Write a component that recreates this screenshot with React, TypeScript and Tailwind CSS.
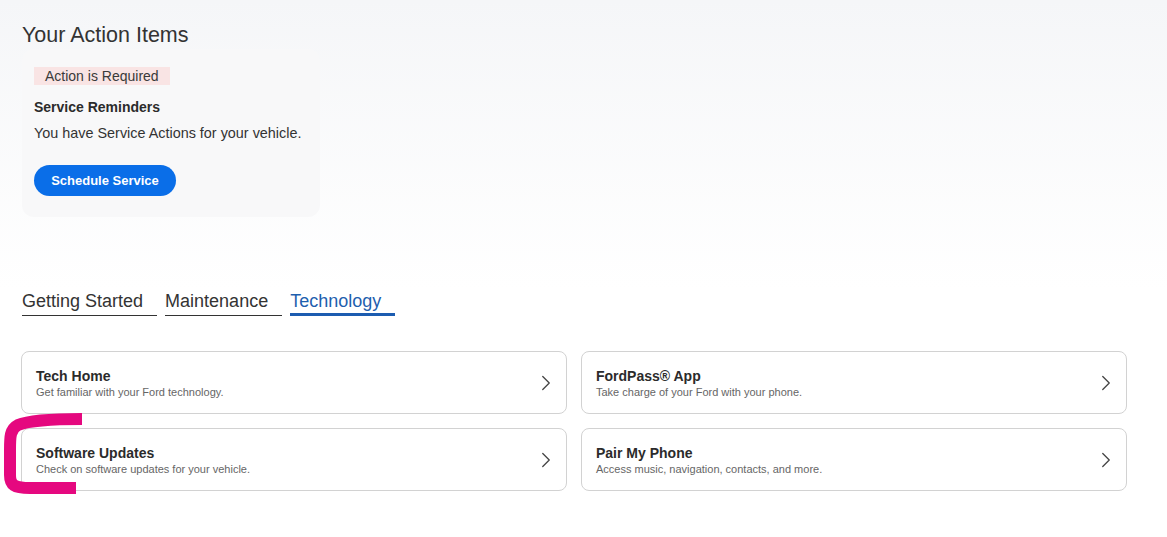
import { ChevronRight } from "lucide-react";

const links = [
  { title: "Tech Home", text: "Get familiar with your Ford technology." },
  { title: "FordPass® App", text: "Take charge of your Ford with your phone." },
  { title: "Software Updates", text: "Check on software updates for your vehicle." },
  { title: "Pair My Phone", text: "Access music, navigation, contacts, and more." },
];

const tabs = ["Getting Started", "Maintenance", "Technology"];

export default function App() {
  return (
    <div className="relative min-h-[537px] w-[1167px] bg-white font-['Liberation_Sans',Arial,sans-serif] text-[#333]">
      {/* Action items */}
      <div className="bg-gradient-to-b from-[#f5f6f8] to-white px-[22px] pt-[22px] pb-[72px]">
        <h1 className="text-[21.5px] leading-[26px] font-normal text-[#333]">Your Action Items</h1>
        <div className="mt-[1px] w-[298px] rounded-xl bg-[#f8f8f9] px-[12px] pt-[15px] pb-[21px]">
          <span className="inline-block bg-[#f9e4e4] px-[11px] text-[14px] leading-[18px] text-[#3a3a3a]">
            Action is Required
          </span>
          <h2 className="mt-[9px] text-[14px] leading-[20px] font-bold text-[#2b2b2b]">Service Reminders</h2>
          <p className="mt-[6px] text-[14.4px] leading-[20px] text-[#333]">You have Service Actions for your vehicle.</p>
          <button className="mt-[22px] h-[31px] w-[142px] rounded-full bg-[#0a6ee8] text-[13px] font-bold text-white">
            Schedule Service
          </button>
        </div>
      </div>

      {/* Tabs */}
      <div className="flex gap-[8px] px-[22px]">
        {tabs.map((t, i) =>
          i === 2 ? (
            <div key={t} className="border-b-[3px] border-[#1c5cb0] pr-[14px] text-[18px] leading-[24px] text-[#1f5fae]">
              {t}
            </div>
          ) : (
            <div key={t} className="border-b border-[#333] pr-[14px] pb-[2px] text-[18px] leading-[24px] text-[#333]">
              {t}
            </div>
          )
        )}
      </div>

      {/* Link cards */}
      <div className="mt-[35px] grid w-[1106px] grid-cols-2 gap-x-[14px] gap-y-[14px] ml-[21px]">
        {links.map((l) => (
          <div
            key={l.title}
            className="flex h-[63px] items-center justify-between rounded-lg border border-[#d2d2d2] bg-white pl-[14px] pr-[7px]"
          >
            <div>
              <div className="text-[14px] leading-[18px] font-bold text-[#2b2b2b]">{l.title}</div>
              <div className="text-[11px] leading-[14px] text-[#666]">{l.text}</div>
            </div>
            <ChevronRight size={26} strokeWidth={1.2} className="text-[#444]" />
          </div>
        ))}
      </div>

      {/* Highlight annotation */}
      <svg className="pointer-events-none absolute left-0 top-[403px]" width="100" height="100" viewBox="0 0 100 100">
        <path
          d="M82 16 C55 16 30 17 18 22 C10 26 10 34 10 47 L10 72 C10 82 14 85 30 85 L76 85"
          fill="none"
          stroke="#e5087f"
          strokeWidth="12"
        />
      </svg>
    </div>
  );
}
